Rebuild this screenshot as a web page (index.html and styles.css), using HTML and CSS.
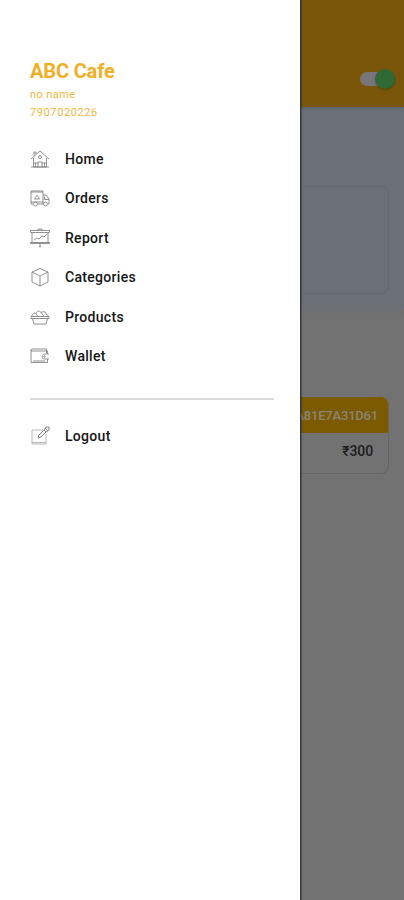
FILE: index.html
```
<!DOCTYPE html>
<html lang="en">
<head>
<meta charset="utf-8">
<title>ABC Cafe</title>
<link rel="stylesheet" href="styles.css">
</head>
<body>
<main class="page">
  <header class="topbar"><span class="toggle"><span class="knob"></span></span></header>
  <section class="summary"><div class="summary-card"></div></section>
  <article class="order">
    <div class="order-id">A81E7A31D61</div>
    <div class="order-total">₹300</div>
  </article>
</main>
<aside class="drawer">
  <h1 class="title">ABC Cafe</h1>
  <p class="meta">no name</p>
  <p class="meta phone">7907020226</p>
  <nav class="menu">
    <a class="item"><svg class="icon" viewBox="0 0 20 20"><path d="M1 10 10 2l9 8M3.500 9v9h13V9M4 7V3h2v2M1 18h18M8 18v-5h4v5M3.500 14H8m4 0h4.500M5.500 14v4m9-4v4"/><circle cx="10" cy="8" r="1.500"/></svg><span>Home</span></a>
    <a class="item"><svg class="icon" viewBox="0 0 20 20"><path d="M1 3h12v13H8M3 16H1V3M1 4h12M13 7h3l3 4v5h-1M13 16h1M14.500 8.500v3H19M4.500 11h5M5 11c0-4 4-4 4 0M7 7v1M1 14h12"/><circle cx="5.500" cy="16" r="2"/><circle cx="15.500" cy="16" r="2"/></svg><span>Orders</span></a>
    <a class="item"><svg class="icon" viewBox="0 0 20 20"><path d="M.5 2.500h19v2H.5zM2 4.500v10m16-10v10M.5 14.500h19v1H.5zM8 2.500V1h4v1.500M10 15.500V19M4 12l3-2 2 1 3-3 2 1 3-3"/><circle cx="10" cy="18.500" r=".5"/></svg><span>Report</span></a>
    <a class="item"><svg class="icon" viewBox="0 0 20 20"><path d="m10 1.500 8 3.500v10l-8 4-8-4V5zM2 5l8 4 8-4M10 9v10"/></svg><span>Categories</span></a>
    <a class="item"><svg class="icon" viewBox="0 0 20 20"><path d="M1 9.500h18v2H1zM2.500 11.500l1.500 5.500h12l1.500-5.500M2 9.500c0-3 2-4 4-3 1-3 4-3 5-1 3-2 6 0 5 2 2 0 2 1 2 2M6 6.500l2 3M11 5.500l3 4"/></svg><span>Products</span></a>
    <a class="item"><svg class="icon" viewBox="0 0 20 20"><path d="M16.500 7V3H2C.7 3 .7 5 2 5h15.500v3M1 4v12.500h16.500V13M19 8h-4.500c-3 0-3 5 0 5H19M3 15h12"/><circle cx="14.500" cy="10.500" r=".7"/></svg><span>Wallet</span></a>
  </nav>
  <hr class="rule">
  <a class="item"><svg class="icon faint" viewBox="0 0 20 20"><path d="M13 4H2v14h14V8M2 16.500h14"/><path class="pen" d="m8 12 1-3 5-5 2 2-5 5zM14 4l2-3h3v3l-3 2M15 2l3 3"/></svg><span>Logout</span></a>
</aside>
</body>
</html>
```
FILE: styles.css
```
* { box-sizing: border-box; }
body { margin: 0; height: 900px; overflow: hidden; font-family: Roboto, sans-serif; background: #727272; }
.page { height: 900px; }
.topbar { height: 107px; background: #795609; display: flex; justify-content: flex-end; align-items: flex-start; padding: 69px 9px 0 0; box-shadow: 0 1px 3px #555b60; position: relative; }
.toggle { width: 35px; height: 20px; display: flex; justify-content: flex-end; align-items: center; }
.toggle::before { content: ""; width: 28px; height: 14px; border-radius: 7px; background: #77767a; margin-right: -13px; }
.knob { width: 20px; height: 20px; border-radius: 50%; background: #2f6a34; box-shadow: 0 1px 2px rgba(0,0,0,.25); position: relative; flex: none; }
.summary { height: 203px; background: #6b7076; padding: 79px 15px 0; box-shadow: 0 1px 4px #6b7076; }
.summary-card { height: 108px; border: 1px solid #626970; border-radius: 8px; }
.order { margin: 87px 15px 0; height: 77px; border: 1px solid #666; border-top: 0; border-radius: 8px; overflow: hidden; text-align: right; font-weight: 500; }
.order-id { height: 36px; line-height: 37px; padding-right: 10px; background: #7c5b00; color: #8a8579; font-size: 13px; letter-spacing: -.2px; }
.order-total { line-height: 36px; padding-right: 15px; font-size: 14px; letter-spacing: -.1px; color: #1c1c1c; }
.drawer { position: absolute; left: 0; top: 0; width: 301px; height: 900px; padding: 59px 26px 0 30px; background: #fff; border-right: 1px solid #343638; box-shadow: 1px 0 1px rgba(0,0,0,.25); }
.title { margin: 0; font-size: 20px; line-height: 25px; font-weight: 700; letter-spacing: -.15px; color: #f2ae25; }
.meta { margin: 2px 0 0; font-size: 11px; line-height: 17px; letter-spacing: .4px; color: #f4b63e; }
.phone { margin-top: 1px; letter-spacing: .6px; }
.menu { margin-top: 18px; }
.item { display: flex; align-items: center; height: 39.5px; gap: 15px; font-size: 14px; font-weight: 500; letter-spacing: .3px; color: #161616; }
.icon { width: 20px; height: 20px; fill: none; stroke: #858585; stroke-width: .9; }
.faint { stroke: #b0b0b0; }
.pen { stroke: #777; }
.rule { margin: 22px 0 16px; border: 0; height: 2px; background: #dadada; }
```
